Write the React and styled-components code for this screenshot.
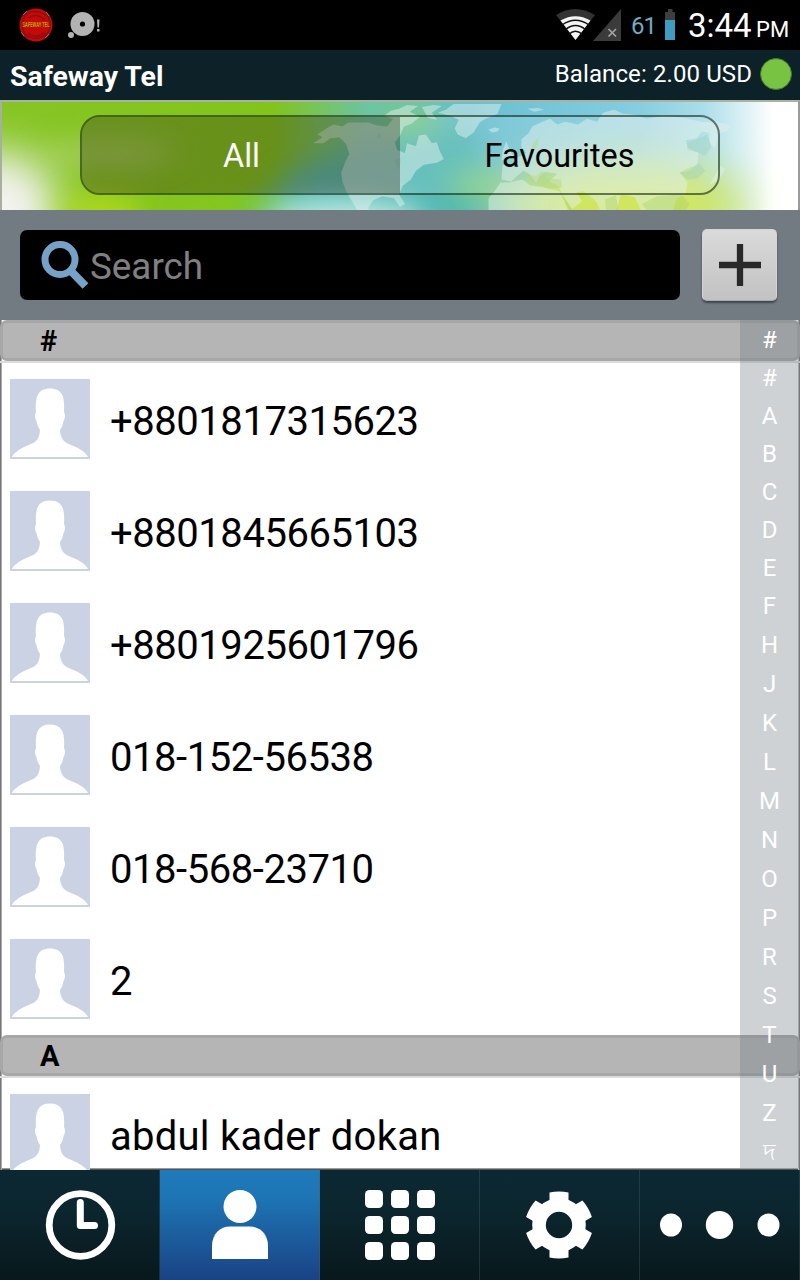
import React, { useState } from 'react'
import styled, { createGlobalStyle } from 'styled-components';

const sections = [
    {
        letter: '#',
        contacts: ['+8801817315623', '+8801845665103', '+8801925601796', '018-152-56538', '018-568-23710', '2'],
    },
    { letter: 'A', contacts: ['abdul kader dokan'] },
];

const indexLetters = ['#', '#', 'A', 'B', 'C', 'D', 'E', 'F', 'H', 'J', 'K', 'L', 'M', 'N', 'O', 'P', 'R', 'S', 'T', 'U', 'Z', 'দ'];

const WorldMap = () => (
    <MapSvg viewBox="0 0 800 110" preserveAspectRatio="none">
        <defs>
            <linearGradient id="sky" x1="0" x2="1" y1="0" y2="0">
                <stop offset="0" stopColor="#86c524" />
                <stop offset="0.34" stopColor="#82c41c" />
                <stop offset="0.46" stopColor="#6cc4a4" />
                <stop offset="0.58" stopColor="#68bfd0" />
                <stop offset="0.8" stopColor="#86cde0" />
                <stop offset="0.88" stopColor="#aadde9" />
                <stop offset="0.97" stopColor="#ffffff" />
                <stop offset="1" stopColor="#ffffff" />
            </linearGradient>
            <filter id="soft" x="-50%" y="-100%" width="200%" height="300%">
                <feGaussianBlur stdDeviation="14" />
            </filter>
            <filter id="softer" x="-50%" y="-50%" width="200%" height="200%">
                <feGaussianBlur stdDeviation="22" />
            </filter>
        </defs>
        <rect width="800" height="110" fill="url(#sky)" />
        <ellipse cx="105" cy="52" rx="70" ry="14" fill="#b0d070" opacity="0.7" filter="url(#soft)" />
        <ellipse cx="-5" cy="112" rx="62" ry="62" fill="#f4f3f2" filter="url(#softer)" />
        <ellipse cx="100" cy="112" rx="42" ry="16" fill="#b2dc1e" filter="url(#soft)" />
        <path d="M225 130 L300 68 L400 32 L480 20 L480 130 Z" fill="#52b8b4" filter="url(#soft)" />
        <ellipse cx="225" cy="112" rx="70" ry="14" fill="#86ca1c" opacity="0.8" filter="url(#soft)" />
        <ellipse cx="345" cy="120" rx="80" ry="20" fill="#c4ece4" filter="url(#soft)" />
        <ellipse cx="410" cy="18" rx="32" ry="13" fill="#80cb78" filter="url(#soft)" />
        <ellipse cx="480" cy="85" rx="30" ry="18" fill="#7cca88" filter="url(#soft)" />
        <ellipse cx="625" cy="106" rx="125" ry="46" fill="#d3e75c" filter="url(#softer)" />
        <rect x="784" y="-40" width="90" height="190" fill="#ffffff" filter="url(#soft)" />
        <g fill="#e3f1ee" opacity="0.48">
            <path d="M313 42 L322 36 L317 33 L326 27 L333 23 L342 25 L348 21 L368 21 L377 24 L387 25 L393 17 L384 14 L391 9 L399 7 L407 3 L418 4 L410 10 L420 15 L412 22 L404 25 L400 34 L395 41 L397 49 L405 52 L407 42 L416 45 L419 34 L426 33 L432 42 L437 41 L440 50 L444 58 L437 62 L424 64 L416 70 L411 79 L403 85 L399 94 L405 104 L400 107 L394 98 L382 96 L373 100 L368 108 L369 112 L358 112 L353 103 L347 93 L342 81 L341 72 L345 61 L349 53 L346 43 L339 36 L330 37 L323 42 Z" />
            <path d="M438 11 L446 8 L454 2 L502 2 L498 12 L486 17 L480 21 L474 31 L466 37 L458 33 L455 27 L459 18 L451 14 Z" />
            <path d="M489 28 L495 26 L500 27 L498 30 L492 31 Z" />
            <path d="M528 7 L539 6 L545 8 L535 10 Z" />
            <path d="M422 5 L434 3 L442 4 L432 11 L437 18 L428 16 Z" />
            <path d="M503 50 L507 40 L510 49 L515 56 L508 58 L502 59 Z" />
            <path d="M517 57 L527 52 L522 46 L522 38 L529 32 L533 25 L543 20 L551 17 L558 23 L566 20 L579 23 L588 17 L598 20 L604 11 L615 8 L624 12 L635 13 L648 17 L664 14 L684 16 L703 20 L722 21 L733 24 L728 30 L720 32 L716 47 L711 41 L711 31 L703 30 L698 37 L687 39 L690 47 L700 52 L699 64 L688 68 L681 72 L689 82 L687 94 L678 98 L674 112 L643 112 L636 97 L622 94 L617 112 L602 112 L597 101 L585 91 L577 92 L583 101 L573 109 L563 95 L560 86 L550 81 L558 73 L546 71 L540 76 L537 83 L530 73 L524 70 L517 76 L512 81 L502 79 L503 64 L514 65 Z" />
            <path d="M501 82 L510 82 L523 79 L531 85 L544 87 L560 91 L571 112 L489 112 L489 98 L495 91 Z" />
            <path d="M717 74 L722 65 L727 68 L720 80 L711 84 Z" />
        </g>
        <g fill="#a8d164" opacity="0.38">
            <path d="M527 74 L537 75 L543 70 L548 78 L562 79 L563 87 L550 88 L534 83 Z" />
            <path d="M562 92 L574 111 L569 111 Z" />
            <path d="M606 99 L617 95 L620 112 L607 112 Z" />
            <path d="M643 104 L658 96 L683 94 L691 104 L686 112 L650 112 Z" />
            <path d="M534 42 L540 35 L537 47 L530 52 Z" />
        </g>
        <g fill="#77bfa9" opacity="0.25">
            <path d="M688 42 L700 37 L709 33 L713 46 L707 55 L699 51 L689 49 Z" />
            <path d="M681 72 L691 70 L700 62 L707 70 L699 78 L689 79 Z" />
            <path d="M376 36 L380 31 L381 37 Z" />
            <path d="M394 60 L402 56 L399 69 Z" />
        </g>
    </MapSvg>
);

const StatusIcons = () => (
    <svg width="122" height="50" viewBox="554 0 122 50">
        <path d="M556 15 Q575 3 595 15 L575.5 40 Z" fill="#333" />
        <path d="M560.5 20.5 Q575.5 12 590.5 20.5 L575.5 40 Z" fill="#f4f4f4" />
        <g fill="none" stroke="#111" strokeWidth="1.5">
            <path d="M562 25 Q575.5 15.500 589 25" />
            <path d="M565.5 29.5 Q575.5 21.500 585.5 29.5" />
            <path d="M569 34 Q575.5 28.500 582 34" />
        </g>
        <path d="M621 9 V41 H593 Z" fill="#3b3b3b" />
        <path d="M608.5 29 L616 36.5 M616 29 L608.5 36.5" stroke="#a4a4a4" strokeWidth="1.7" />
        <path d="M668 9 H672.5 V12 H675 V20 H665 V12 H668 Z" fill="#3e3e3e" />
        <rect x="665" y="20" width="10" height="20" fill="#3f9bc0" />
    </svg>
);

const Person = () => (
    <svg width="80" height="80" viewBox="0 0 80 80">
        <rect width="80" height="80" fill="#cbd2e3" />
        <path
            d="M2 78 C4 73 12 68.500 20 65.500 C26 63 29.500 60 30 51 C28.500 49 27 46 26.500 42 C24.800 40 24.500 35 26 33 C25 18 27.500 9.500 40 9.500 C52.500 9.500 55 18 54 33 C55.500 35 55.200 40 53.500 42 C53 46 51.500 49 50 51 C50.500 60 54 63 60 65.500 C68 68.500 76 73 78 78 Z"
            fill="#fff"
        />
    </svg>
);

const ClockIcon = () => (
    <svg width="160" height="110" viewBox="0 0 160 110">
        <circle cx="80.500" cy="55" r="31.300" fill="none" stroke="#fff" strokeWidth="6.800" />
        <path d="M80.300 32.500 V55.500 H94.500" fill="none" stroke="#fff" strokeWidth="7" strokeLinecap="round" strokeLinejoin="round" />
    </svg>
);

const ContactIcon = () => (
    <svg width="160" height="110" viewBox="0 0 160 110">
        <circle cx="80" cy="36.500" r="16.500" fill="#fff" />
        <path d="M52 89 V76 C52 64 60 56.500 70 56.500 H90 C100 56.500 108 64 108 76 V89 Z" fill="#fff" />
    </svg>
);

const KeypadIcon = () => (
    <svg width="160" height="110" viewBox="0 0 160 110" fill="#fff">
        {[20, 46, 72].map((y) => [45, 71, 97].map((x) => (
            <rect key={`${x}-${y}`} x={x} y={y} width="18" height="18" rx="4.500" />
        )))}
    </svg>
);

const GearIcon = () => (
    <svg width="160" height="110" viewBox="0 0 160 110">
        <g fill="#fff">
            {[0, 60, 120, 180, 240, 300].map((angle) => (
                <path key={angle} d="M69.500 34 V22.500 Q79 20.500 88.500 22.500 V34 Z" transform={`rotate(${angle} 79 55)`} />
            ))}
        </g>
        <circle cx="79" cy="55" r="20" fill="none" stroke="#fff" strokeWidth="13.600" />
    </svg>
);

const MoreIcon = () => (
    <svg width="160" height="110" viewBox="0 0 160 110" fill="#fff">
        <ellipse cx="31" cy="55" rx="11" ry="11.500" />
        <ellipse cx="79.500" cy="55" rx="13.700" ry="14" />
        <ellipse cx="128.500" cy="55" rx="11" ry="11.500" />
    </svg>
);

const navItems = [
    { id: 'recent', Icon: ClockIcon },
    { id: 'contacts', Icon: ContactIcon },
    { id: 'keypad', Icon: KeypadIcon },
    { id: 'settings', Icon: GearIcon },
    { id: 'more', Icon: MoreIcon },
];

const App = () => {
    const [page, setPage] = useState('contacts');
    const [tab, setTab] = useState('All');

    return (
        <Screen>
            <GlobalStyle />
            <StatusBar>
                <Notifications>
                    <svg width="36" height="36" viewBox="0 0 36 36">
                        <circle cx="18" cy="18" r="16.500" fill="#c60808" />
                        <g fill="none" stroke="#8c1010" strokeWidth="1.500">
                            <path d="M5 9 Q17 0 29 9 M4 25 Q18 38 32 24 M9 5 Q0 19 9 30 M28 6 Q37 19 26 31" />
                            <path d="M10 11 Q19 5 27 13 M10 26 Q18 33 27 25" />
                        </g>
                        <path d="M5 8 L9 4 M28 5 L31 9 M3 25 L6 29 M31 27 L27 31" stroke="#b77" strokeWidth="0.800" />
                        <LogoText x="18" y="12.700" transform="scale(1 1.6)">SAFEWAY TEL</LogoText>
                    </svg>
                    <svg width="36" height="36" viewBox="0 0 36 36">
                        <circle cx="16.500" cy="17" r="12" fill="#b3b3b3" />
                        <circle cx="16.500" cy="17" r="2.600" fill="#000" />
                        <circle cx="5" cy="28" r="3" fill="#b3b3b3" />
                        <path d="M31 12.500 H33.500 L33 20.500 H31.500 Z M31 22 H33.500 V24.500 H31 Z" fill="#b3b3b3" />
                    </svg>
                </Notifications>
                <StatusRight>
                    <StatusIcons />
                    <Percent>61</Percent>
                    <Time>3:44</Time>
                    <Meridiem>PM</Meridiem>
                </StatusRight>
            </StatusBar>
            <TitleBar>
                <Title>Safeway Tel</Title>
                <Balance>Balance: 2.00 USD</Balance>
                <OnlineDot />
            </TitleBar>
            <Banner>
                <WorldMap />
                <Tabs>
                    {['All', 'Favourites'].map((name) => (
                        <Tab key={name} $active={tab === name} onClick={() => setTab(name)}>{name}</Tab>
                    ))}
                </Tabs>
            </Banner>
            <SearchBar>
                <SearchBox>
                    <svg width="50" height="50" viewBox="0 0 50 50">
                        <circle cx="20" cy="19.500" r="15" fill="none" stroke="#76a2c8" strokeWidth="7" />
                        <path d="M29.500 29.500 L45.500 46" stroke="#76a2c8" strokeWidth="8" />
                    </svg>
                    <Placeholder>Search</Placeholder>
                </SearchBox>
                <AddButton>
                    <svg width="42" height="42" viewBox="0 0 42 42">
                        <path d="M21 0 V42 M0 21 H42" stroke="#292929" strokeWidth="6.300" />
                    </svg>
                </AddButton>
            </SearchBar>
            <ContactList>
                {sections.map((section) => (
                    <section key={section.letter}>
                        <SectionHeader>
                            <SectionLabel>{section.letter}</SectionLabel>
                        </SectionHeader>
                        {section.contacts.map((name) => (
                            <ContactRow key={name}>
                                <Person />
                                <ContactName $number={/\d/.test(name)}>{name}</ContactName>
                            </ContactRow>
                        ))}
                    </section>
                ))}
                <IndexStrip>
                    {indexLetters.map((letter, i) => (
                        <IndexLetter key={i} $tall={i >= 8}>{letter}</IndexLetter>
                    ))}
                </IndexStrip>
            </ContactList>
            <BottomNav>
                {navItems.map(({ id, Icon }) => (
                    <NavItem key={id} $active={page === id} onClick={() => setPage(id)}>
                        <Icon />
                    </NavItem>
                ))}
            </BottomNav>
        </Screen>
    )
}

const GlobalStyle = createGlobalStyle`
    * {
        box-sizing: border-box;
    }
    body {
        margin: 0;
        font-family: Roboto, "Noto Sans", sans-serif;
    }
    svg {
        display: block;
        flex-shrink: 0;
    }
`

const Screen = styled.div`
    display: flex;
    flex-direction: column;
    width: 800px;
    height: 1280px;
    overflow: hidden;
    background-color: #fff;
`

const StatusBar = styled.div`
    display: flex;
    justify-content: space-between;
    align-items: center;
    height: 50px;
    padding: 0 12px 0 18px;
    background-color: #000;
`

const Notifications = styled.div`
    display: flex;
    gap: 12px;
`

const LogoText = styled.text`
    font-size: 4.2px;
    font-weight: 700;
    text-anchor: middle;
    fill: #b8a600;
`

const StatusRight = styled.div`
    display: grid;
    grid-template-columns: 77px 34px 23px 68px 32px;
    height: 50px;
    color: #fff;

    svg {
        grid-area: 1 / 1 / 2 / 4;
    }
`

const Percent = styled.span`
    grid-area: 1 / 2;
    line-height: 52px;
    font-size: 24px;
    letter-spacing: -1px;
    color: #6fabc2;
`

const Time = styled.span`
    grid-area: 1 / 4;
    line-height: 52px;
    font-size: 33px;
`

const Meridiem = styled.span`
    grid-area: 1 / 5;
    line-height: 59px;
    font-size: 22px;
`

const TitleBar = styled.div`
    display: flex;
    align-items: center;
    height: 50px;
    padding: 0 8px 0 10px;
    background-color: #0d2129;
    color: #fff;
`

const Title = styled.h1`
    flex: 1;
    margin: 0;
    padding-top: 3px;
    line-height: 50px;
    font-size: 28.4px;
    font-weight: 700;
`

const Balance = styled.span`
    line-height: 48px;
    padding-bottom: 2px;
    font-size: 24px;
    letter-spacing: 0.1px;
`

const OnlineDot = styled.span`
    width: 32px;
    height: 32px;
    margin-left: 8px;
    margin-bottom: 2px;
    border-radius: 50%;
    background-color: #78c442;
    border: 1px solid #44772f;
`

const Banner = styled.div`
    position: relative;
    height: 110px;
    padding: 15px 80px;
`

const MapSvg = styled.svg`
    position: absolute;
    inset: 0;
    width: 800px;
    height: 110px;
    border-top: 2px solid #a9b3a0;
    border-left: 2px solid rgba(110, 120, 100, 0.6);
    border-right: 2px solid #9a9a9a;
`

const Tabs = styled.div`
    position: relative;
    display: flex;
    height: 80px;
    border: 2px solid rgba(20, 40, 20, 0.6);
    border-radius: 20px;
    overflow: hidden;
`

const Tab = styled.button`
    flex: 1;
    padding: 1px 0 0 1px;
    border: none;
    background-color: ${({ $active }) => ($active ? 'rgba(52, 48, 20, 0.34)' : 'rgba(255, 255, 255, 0.12)')};
    color: ${({ $active }) => ($active ? '#fff' : '#000')};
    font-family: inherit;
    font-size: 32.4px;
`

const SearchBar = styled.div`
    display: flex;
    align-items: center;
    height: 110px;
    padding: 0 22px 0 20px;
    background-color: #727a82;
`

const SearchBox = styled.div`
    display: flex;
    align-items: center;
    width: 660px;
    height: 70px;
    padding-left: 20px;
    border-radius: 7px;
    background-color: #000;
`

const Placeholder = styled.span`
    padding-top: 3px;
    font-size: 36.8px;
    color: #808080;
`

const AddButton = styled.button`
    display: flex;
    align-items: center;
    justify-content: center;
    width: 75px;
    height: 72px;
    margin-left: 22px;
    padding: 0;
    border: 1px solid #d5d5d5;
    border-bottom-color: #aaa;
    border-radius: 5px;
    background: linear-gradient(#dadada, #c2c2c2);
    box-shadow: 0 2px 2px rgba(30, 35, 40, 0.6);
`

const ContactList = styled.div`
    position: relative;
    height: 850px;
    overflow: hidden;
    background-color: #fff;
    box-shadow: inset 1px 0 #777, inset 2px 0 #aaa, inset -1px 0 #777, inset -2px 0 #bbb, inset 0 -1px #555, inset 0 -2px #999;
`

const SectionHeader = styled.div`
    height: 43px;
    border-bottom: 2px solid #dcdcdc;
`

const SectionLabel = styled.h2`
    height: 41px;
    margin: 0;
    padding-left: 37px;
    border: 3px solid #a7a7a7;
    border-radius: 7px;
    background-color: #b5b5b5;
    line-height: 37px;
    font-size: 29px;
    font-weight: 700;
    color: #000;
`

const ContactRow = styled.div`
    display: flex;
    align-items: center;
    height: 112px;
    padding-left: 10px;
`

const ContactName = styled.span`
    padding: 4px 0 0 20px;
    font-size: 40px;
    letter-spacing: ${({ $number }) => ($number ? '-0.45px' : '0.25px')};
    color: #000;
`

const IndexStrip = styled.div`
    position: absolute;
    top: 0;
    right: 0;
    width: 60px;
    height: 848px;
    background-color: rgba(112, 122, 129, 0.34);
`

const IndexLetter = styled.span`
    display: block;
    height: ${({ $tall }) => ($tall ? 39 : 38)}px;
    padding-right: 1px;
    line-height: ${({ $tall }) => ($tall ? 42 : 40)}px;
    font-size: 24px;
    text-align: center;
    color: #fff;
`

const BottomNav = styled.nav`
    display: flex;
    height: 110px;
    background-color: #0a1e25;
`

const NavItem = styled.button`
    flex: 1;
    padding: 0;
    border: none;
    box-shadow: inset -1px 0 rgba(70, 100, 105, 0.35);
    background: ${({ $active }) => ($active ? 'linear-gradient(#1f7aba, #1d75b4 25%, #1a4284)' : 'linear-gradient(#0b2832, #0c262f 35%, #08181b)')};
`
export default App
